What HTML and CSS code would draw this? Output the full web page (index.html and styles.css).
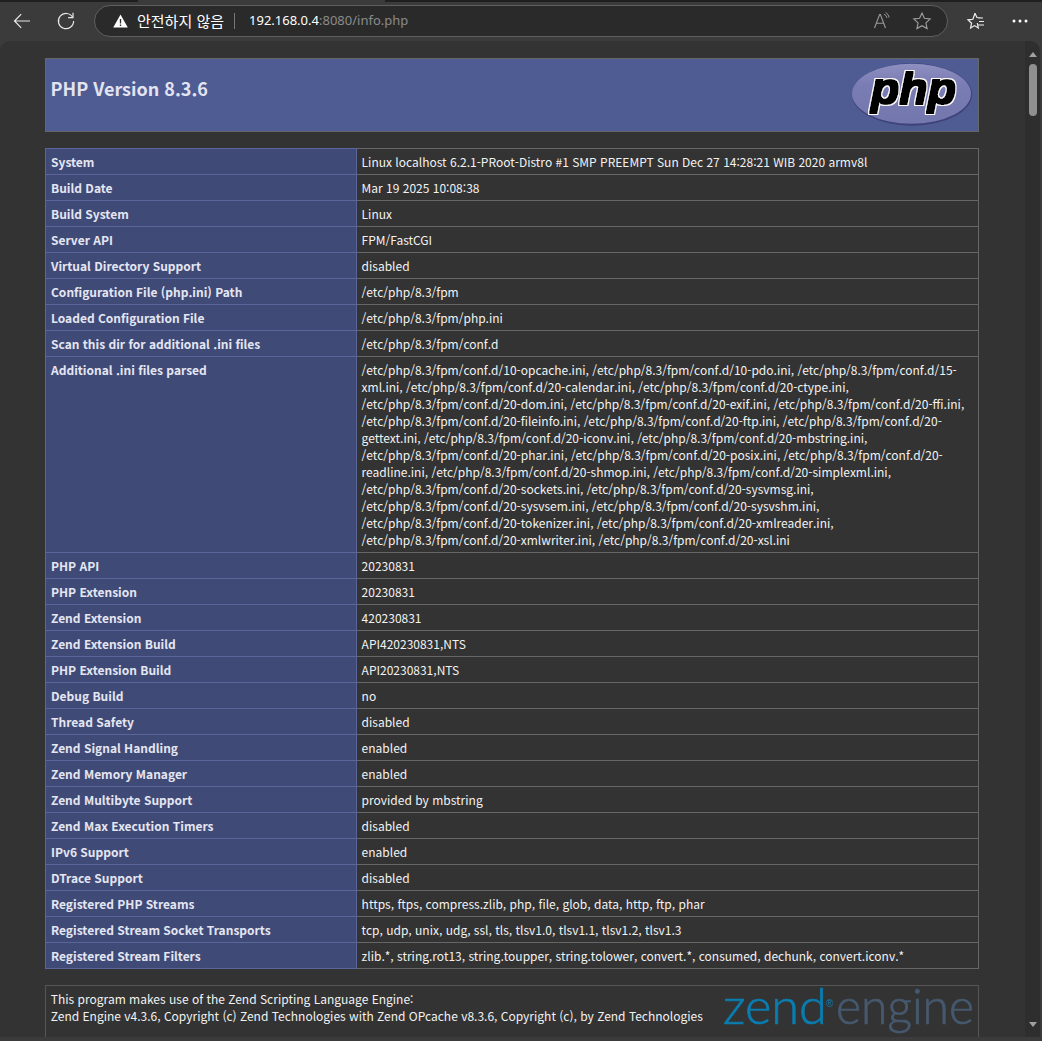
FILE: index.html
```html
<!DOCTYPE html>
<html lang="ko">
<head>
<meta charset="utf-8">
<title>PHP 8.3.6 - phpinfo()</title>
<link rel="stylesheet" href="styles.css">
</head>
<body>
<div class="window">
  <div class="tabstrip"><span class="tab-gap"></span></div>
  <header class="toolbar">
    <button class="tool back" aria-label="뒤로"><svg width="20" height="20" viewBox="0 0 20 20"><path d="M18 10H2.5M9.2 3.2 2.5 10l6.7 6.8" fill="none" stroke="#e8e8e8" stroke-width="1.2"/></svg></button>
    <button class="tool reload" aria-label="새로 고침"><svg width="20" height="20" viewBox="0 0 20 20"><path d="M16.6 6.3A7.6 7.6 0 1 0 17.6 10" fill="none" stroke="#e8e8e8" stroke-width="1.2"/><path d="M17 1.8v4.9h-4.9" fill="none" stroke="#e8e8e8" stroke-width="1.2"/></svg></button>
    <div class="address">
      <svg class="warn" width="15" height="14" viewBox="0 0 15 14"><path d="M7.5 .5 14.8 13.5H.2z" fill="#fff"/><path d="M7.5 5v4.6M7.5 10.6v1.5" stroke="#2a2a2a" stroke-width="1.3"/></svg>
      <span class="security">안전하지 않음</span>
      <span class="divider"></span>
      <span class="url"><span class="host">192.168.0.4</span>:8080/info.php</span>
      <span class="address-icons">
        <svg width="20" height="20" viewBox="0 0 20 20"><path d="M2.5 17 7.6 3.5h.8L13.5 17M4.4 12.2h7.2" fill="none" stroke="#9a9a9a" stroke-width="1.1"/><path d="M12 3.2a5 5 0 0 1 3 3.6M13.6 1.4a7.6 7.6 0 0 1 3.6 5.2" fill="none" stroke="#9a9a9a" stroke-width="1"/></svg>
        <svg width="20" height="20" viewBox="0 0 20 20"><path d="m10 2 2.4 5.3 5.8.7-4.3 3.9 1.2 5.7L10 14.7l-5.1 2.9 1.2-5.7L1.8 8l5.8-.7z" fill="none" stroke="#a0a0a0" stroke-width="1.1"/></svg>
      </span>
    </div>
    <button class="tool favorites" aria-label="즐겨찾기"><svg width="20" height="20" viewBox="0 0 20 20"><path d="m8 2.2 1.9 4.3 5 .5M16 7H11M17 10.5h-5M17 14h-6.5M10.3 12l1 5-3.8-2.4L3.6 17l1-4.8L1 8.8l4.9-.5L8 2.2" fill="none" stroke="#eee" stroke-width="1.2"/></svg></button>
    <button class="tool more" aria-label="더 보기"><span class="dot"></span><span class="dot"></span><span class="dot"></span></button>
  </header>
  <div class="viewport">
    <main class="page">
      <div class="center">
        <div class="title-box">
          <h1>PHP Version 8.3.6</h1>
          <svg class="php-logo" width="122" height="66" viewBox="0 0 122 66">
            <defs>
              <linearGradient id="phpfill" x1="0" y1="0" x2="0" y2="1"><stop offset="0" stop-color="#8e90c0"/><stop offset=".35" stop-color="#7a7cb4"/><stop offset="1" stop-color="#7476ae"/></linearGradient>
              <filter id="phpoutline" x="-10%" y="-20%" width="120%" height="140%">
                <feMorphology in="SourceAlpha" operator="dilate" radius="1.6" result="halo"/>
                <feFlood flood-color="#ffffff"/>
                <feComposite in2="halo" operator="in" result="white"/>
                <feMorphology in="SourceAlpha" operator="dilate" radius=".6" result="fat"/>
                <feFlood flood-color="#000000"/>
                <feComposite in2="fat" operator="in" result="black"/>
                <feMerge><feMergeNode in="white"/><feMergeNode in="black"/></feMerge>
              </filter>
            </defs>
            <ellipse cx="61" cy="31.5" rx="60" ry="31.2" fill="#3d4278"/>
            <ellipse cx="60.5" cy="30.7" rx="59.5" ry="30" fill="url(#phpfill)"/>
            <text class="php-word" x="20" y="41" textLength="85" lengthAdjust="spacingAndGlyphs" filter="url(#phpoutline)">php</text>
          </svg>
        </div>
        <table class="info">
          <tr><td class="e">System</td><td class="v">Linux localhost 6.2.1-PRoot-Distro #1 SMP PREEMPT Sun Dec 27 14:28:21 WIB 2020 armv8l</td></tr>
          <tr><td class="e">Build Date</td><td class="v">Mar 19 2025 10:08:38</td></tr>
          <tr><td class="e">Build System</td><td class="v">Linux</td></tr>
          <tr><td class="e">Server API</td><td class="v">FPM/FastCGI</td></tr>
          <tr><td class="e">Virtual Directory Support</td><td class="v">disabled</td></tr>
          <tr><td class="e">Configuration File (php.ini) Path</td><td class="v">/etc/php/8.3/fpm</td></tr>
          <tr><td class="e">Loaded Configuration File</td><td class="v">/etc/php/8.3/fpm/php.ini</td></tr>
          <tr><td class="e">Scan this dir for additional .ini files</td><td class="v">/etc/php/8.3/fpm/conf.d</td></tr>
          <tr><td class="e">Additional .ini files parsed</td><td class="v">/etc/php/8.3/fpm/conf.d/10-opcache.ini, /etc/php/8.3/fpm/conf.d/10-pdo.ini, /etc/php/8.3/fpm/conf.d/15-xml.ini, /etc/php/8.3/fpm/conf.d/20-calendar.ini, /etc/php/8.3/fpm/conf.d/20-ctype.ini, /etc/php/8.3/fpm/conf.d/20-dom.ini, /etc/php/8.3/fpm/conf.d/20-exif.ini, /etc/php/8.3/fpm/conf.d/20-ffi.ini, /etc/php/8.3/fpm/conf.d/20-fileinfo.ini, /etc/php/8.3/fpm/conf.d/20-ftp.ini, /etc/php/8.3/fpm/conf.d/20-gettext.ini, /etc/php/8.3/fpm/conf.d/20-iconv.ini, /etc/php/8.3/fpm/conf.d/20-mbstring.ini, /etc/php/8.3/fpm/conf.d/20-phar.ini, /etc/php/8.3/fpm/conf.d/20-posix.ini, /etc/php/8.3/fpm/conf.d/20-readline.ini, /etc/php/8.3/fpm/conf.d/20-shmop.ini, /etc/php/8.3/fpm/conf.d/20-simplexml.ini, /etc/php/8.3/fpm/conf.d/20-sockets.ini, /etc/php/8.3/fpm/conf.d/20-sysvmsg.ini, /etc/php/8.3/fpm/conf.d/20-sysvsem.ini, /etc/php/8.3/fpm/conf.d/20-sysvshm.ini, /etc/php/8.3/fpm/conf.d/20-tokenizer.ini, /etc/php/8.3/fpm/conf.d/20-xmlreader.ini, /etc/php/8.3/fpm/conf.d/20-xmlwriter.ini, /etc/php/8.3/fpm/conf.d/20-xsl.ini</td></tr>
          <tr><td class="e">PHP API</td><td class="v">20230831</td></tr>
          <tr><td class="e">PHP Extension</td><td class="v">20230831</td></tr>
          <tr><td class="e">Zend Extension</td><td class="v">420230831</td></tr>
          <tr><td class="e">Zend Extension Build</td><td class="v">API420230831,NTS</td></tr>
          <tr><td class="e">PHP Extension Build</td><td class="v">API20230831,NTS</td></tr>
          <tr><td class="e">Debug Build</td><td class="v">no</td></tr>
          <tr><td class="e">Thread Safety</td><td class="v">disabled</td></tr>
          <tr><td class="e">Zend Signal Handling</td><td class="v">enabled</td></tr>
          <tr><td class="e">Zend Memory Manager</td><td class="v">enabled</td></tr>
          <tr><td class="e">Zend Multibyte Support</td><td class="v">provided by mbstring</td></tr>
          <tr><td class="e">Zend Max Execution Timers</td><td class="v">disabled</td></tr>
          <tr><td class="e">IPv6 Support</td><td class="v">enabled</td></tr>
          <tr><td class="e">DTrace Support</td><td class="v">disabled</td></tr>
          <tr><td class="e">Registered PHP Streams</td><td class="v">https, ftps, compress.zlib, php, file, glob, data, http, ftp, phar</td></tr>
          <tr><td class="e">Registered Stream Socket Transports</td><td class="v">tcp, udp, unix, udg, ssl, tls, tlsv1.0, tlsv1.1, tlsv1.2, tlsv1.3</td></tr>
          <tr><td class="e">Registered Stream Filters</td><td class="v">zlib.*, string.rot13, string.toupper, string.tolower, convert.*, consumed, dechunk, convert.iconv.*</td></tr>
        </table>
        <div class="zend-box">
          <svg class="zend-logo" width="252" height="54" viewBox="0 0 252 54">
            <text class="zend-word" x="0" y="38" textLength="104" lengthAdjust="spacingAndGlyphs">zend</text>
            <text class="zend-reg" x="103" y="21">®</text>
            <text class="engine-word" x="113" y="38" textLength="138" lengthAdjust="spacingAndGlyphs">engine</text>
          </svg>
          <p>This program makes use of the Zend Scripting Language Engine:<br>Zend Engine v4.3.6, Copyright (c) Zend Technologies with Zend OPcache v8.3.6, Copyright (c), by Zend Technologies</p>
        </div>
      </div>
    </main>
    <aside class="scrollbar">
      <span class="arrow up"></span>
      <span class="thumb"></span>
      <span class="arrow down"></span>
    </aside>
  </div>
</div>
</body>
</html>
```

FILE: styles.css
```css
* { box-sizing: border-box; }
html, body { margin: 0; height: 100%; overflow: hidden; background: #3b3b3b; }
body { font-family: "Noto Sans CJK KR", "Noto Sans", sans-serif; font-size: 12px; line-height: 17px; color: #f2f2f2; }
.window { width: 1042px; height: 1041px; display: flex; flex-direction: column; background: #3b3b3b; }
.tabstrip { height: 2px; flex: none; background: #1f1f1f; display: flex; padding-left: 138px; }
.tab-gap { width: 247px; background: #3b3b3b; }
.toolbar { height: 39px; flex: none; display: flex; align-items: center; padding: 0 0 2px 12px; }
.tool { border: 0; background: none; padding: 0; width: 20px; height: 20px; display: flex; align-items: center; justify-content: center; }
.back { margin-right: 24px; }
.reload { margin-right: 18px; }
.address { width: 854px; height: 32px; flex: none; border: 1px solid #5f5f5f; border-radius: 16px; background: #2a2a2a; display: flex; align-items: center; padding: 0 15px 0 18px; color: #fff; }
.warn { flex: none; margin-right: 9px; }
.security { font-size: 15px; }
.divider { width: 1px; height: 16px; background: #777; margin: 0 14px 0 10px; }
.url { color: #8a8a8a; font-family: "Noto Sans", sans-serif; font-size: 13px; }
.host { color: #fff; }
.address-icons { margin-left: auto; display: flex; gap: 20px; }
.favorites { margin-left: 19px; }
.more { margin-left: 23px; gap: 4px; width: 20px; }
.dot { width: 2px; height: 2px; border-radius: 50%; background: #fff; flex: none; box-shadow: 0 0 0 .5px #fff; }
.viewport { flex: none; height: 996px; display: flex; background: #333; border-radius: 10px 10px 0 0; margin-right: 2px; overflow: hidden; }
.page { flex: 1; min-width: 0; overflow: hidden; padding: 17px 46px 0 45px; }
.center { width: 934px; }
.title-box { height: 74px; border: 1px solid #666; background: #4f5b93; position: relative; padding: 0 5px 0 4.5px; margin-bottom: 16px; }
h1 { margin: 0; padding-top: 15px; font-size: 18px; line-height: 28px; font-weight: 700; color: #e2e4f0; }
.php-logo { position: absolute; right: 5px; top: 4px; }
.php-word { font-family: "Liberation Sans", sans-serif; font-weight: 700; font-style: italic; font-size: 44px; fill: #000; }
.info { width: 934px; border-collapse: collapse; table-layout: fixed; margin-bottom: 16px; }
.info td { border: 1px solid #666; padding: 4px 5px; vertical-align: top; overflow-wrap: anywhere; }
.e { width: 311px; background: #404a77; border-color: #5a6699 !important; font-weight: 700; color: #e4e6f2; }
.info .v { background: #333; padding-left: 4.6px; }
.zend-box { border: 1px solid #555; padding: 4px 4.8px; height: 70px; position: relative; }
.zend-box p { margin: 0; position: relative; }
.zend-logo { position: absolute; left: 677px; top: 0; }
.zend-word { font-family: "Lato", sans-serif; font-weight: 300; font-size: 50px; fill: #0a7db0; stroke: #0a7db0; stroke-width: .7px; }
.zend-reg { font-family: "Liberation Sans", sans-serif; font-size: 10px; fill: #0a7db0; }
.engine-word { font-family: "Lato", sans-serif; font-weight: 300; font-size: 50px; fill: #46596f; stroke: #46596f; stroke-width: .7px; }
.scrollbar { width: 15px; flex: none; background: #2e2e2e; border-radius: 0 10px 0 0; display: flex; flex-direction: column; align-items: center; padding: 11px 0 10px; }
.arrow { width: 0; height: 0; border-left: 4.5px solid transparent; border-right: 4.5px solid transparent; flex: none; }
.up { border-bottom: 5px solid #a0a0a0; }
.down { border-top: 5px solid #a0a0a0; margin-top: auto; }
.thumb { width: 8px; height: 52px; border-radius: 4px; background: #8f8f8f; margin-top: 7px; }
```
